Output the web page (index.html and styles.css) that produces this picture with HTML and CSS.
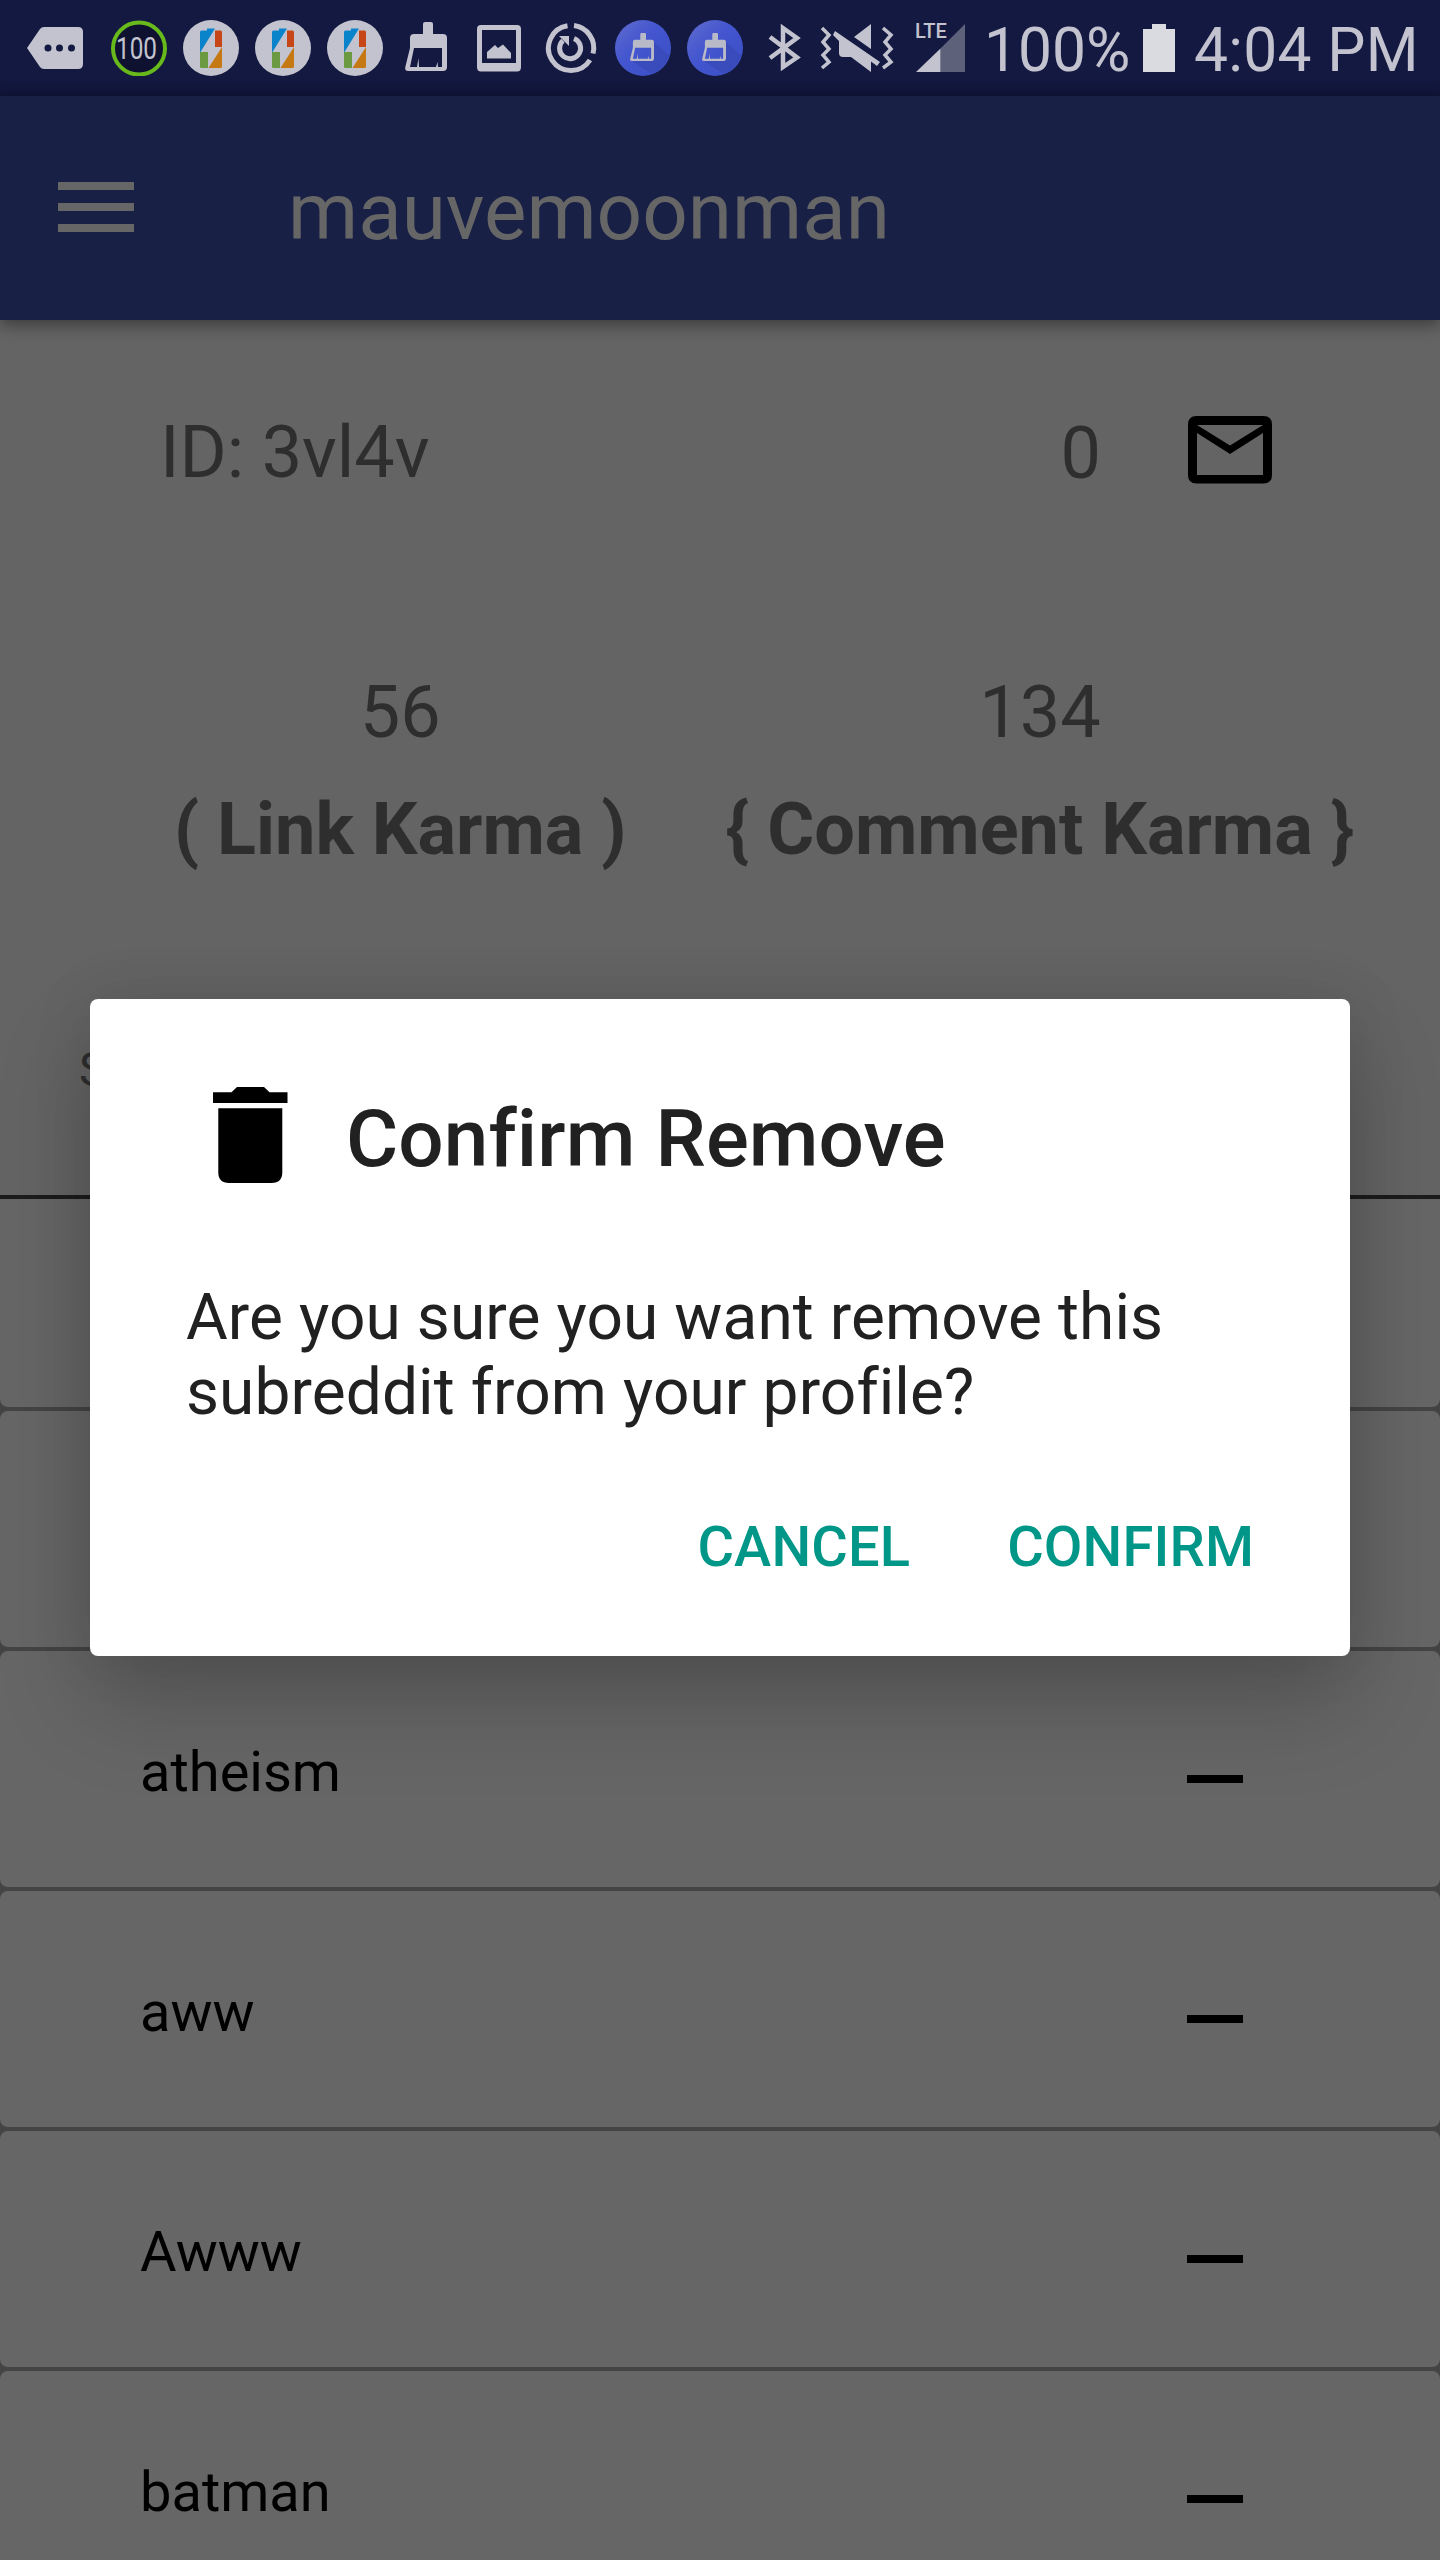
FILE: index.html
```html
<!DOCTYPE html>
<html lang="en">
<head>
<meta charset="utf-8">
<title>mauvemoonman</title>
<link rel="stylesheet" href="styles.css">
</head>
<body>
<svg class="defs" width="0" height="0" aria-hidden="true">
  <defs>
    <linearGradient id="cleaner" x1="0" y1="0" x2="1" y2="1"><stop offset="0" stop-color="#5f6ccf"/><stop offset=".45" stop-color="#4355cf"/><stop offset="1" stop-color="#3d4fc4"/></linearGradient>
    <symbol id="battery-app" viewBox="0 0 56 56">
      <circle cx="28" cy="28" r="28" fill="#c3c3cf"/>
      <path fill="#0984cb" d="M17 12Q17 10.500 18.500 10.500H24V8.500H32L17.500 32H17Z"/>
      <path fill="#c64617" d="M32 10.500H37.500Q39 10.500 39 12V27H32Z"/>
      <path fill="#6b9a42" d="M17 32H25V48H18.500Q17 48 17 46.500Z"/>
      <path fill="#c67812" d="M39 27V46.500Q39 48 37.500 48H25.500Z"/>
    </symbol>
    <symbol id="broom" viewBox="0 0 42 50">
      <path fill-rule="evenodd" d="M18 2Q18 0 20 0H26Q28 0 28 2V12H38Q42 12 42 16V45Q42 49 38 49H3Q-.5 49 .3 45L5 26V16Q5 12 9 12H18ZM9 26L5 45H12L13.500 36L14 45H31L32.500 40L33 45H37V26Z"/>
    </symbol>
    <symbol id="cleaner-app" viewBox="0 0 56 56">
      <circle cx="28" cy="28" r="28" fill="url(#cleaner)"/>
      <path fill="#3848b5" opacity=".7" d="M38 21L54 35.500Q49 50 37 54L17 41H38Z"/>
      <use href="#broom" x="15" y="13" width="24" height="28.500" fill="#b9bac8"/>
    </symbol>
  </defs>
</svg>
<div class="screen">
  <header class="status">
    <div class="notifications">
      <svg class="more" width="56" height="56" viewBox="0 0 56 56"><path fill="#c3c3cf" d="M0 28L13 9Q14.500 7 17 7H51Q56 7 56 12V44Q56 49 51 49H17Q14.500 49 13 47Z"/><g fill="#141941"><circle cx="21" cy="28" r="3.500"/><circle cx="32.500" cy="28" r="3.500"/><circle cx="44.500" cy="28" r="3.500"/></g></svg>
      <svg width="56" height="56" viewBox="0 0 56 56"><circle cx="28" cy="28.500" r="26" fill="#0e1230" stroke="#68b91b" stroke-width="4"/><text class="level" x="5" y="38.500" textLength="41" lengthAdjust="spacingAndGlyphs">100</text></svg>
      <svg width="56" height="56"><use href="#battery-app"/></svg>
      <svg width="56" height="56"><use href="#battery-app"/></svg>
      <svg width="56" height="56"><use href="#battery-app"/></svg>
      <svg width="56" height="56"><use href="#broom" x="6" y="2" width="42" height="50" fill="#c3c3cf"/></svg>
      <svg width="56" height="56" viewBox="0 0 56 56"><path fill="#c3c3cf" fill-rule="evenodd" d="M10 5H46Q50 5 50 9V47Q50 51.500 46 51.500H10Q6 51.500 6 47V9Q6 5 10 5ZM11 10V43H45V10ZM16 32L24 25L27 28L32 24.500L40 33V38.500H16Z"/></svg>
      <svg width="56" height="56" viewBox="0 0 56 56"><g fill="none" stroke="#c3c3cf" stroke-width="5"><path d="M24.500 5.800A22.500 22.500 0 1 0 47 40"/><path d="M31 5.600A22.500 22.500 0 0 1 50 33.500"/><path d="M31 18.500A10.500 10.500 0 1 1 20 20.500"/></g><path fill="#c3c3cf" d="M16 16H26V26L22.500 22.500L20 20Z"/></svg>
      <svg width="56" height="56"><use href="#cleaner-app"/></svg>
      <svg width="56" height="56"><use href="#cleaner-app"/></svg>
    </div>
    <svg class="bluetooth" width="34" height="50" viewBox="0 0 34 50"><path fill="none" stroke="#c3c3cf" stroke-width="4.500" d="M2 14L29 34.500L15 44V5L29 15L2 35"/></svg>
    <svg class="mute" width="74" height="50" viewBox="0 0 74 50"><g fill="none" stroke="#c3c3cf" stroke-width="3.500"><path d="M2 4L9 11L3 18L9 25L3 31L9 38L2 44"/><path d="M63 4L71 11L65 18L71 25L65 31L71 38L63 44"/></g><path fill="#c3c3cf" d="M15 7L60 38L57 42L51 37.500V48L31 33H23Q19 33 19 29V17L13 11ZM51 0V25L34 13Z"/></svg>
    <div class="signal"><svg width="50" height="50" viewBox="0 0 50 50"><path fill="#5e617a" d="M24.500 24.500L49 0V48H24.500Z"/><path fill="#c3c3cf" d="M0 48L24.500 24.500V48Z"/></svg><span class="lte">LTE</span></div>
    <span class="percent">100%</span>
    <svg class="charge" width="32" height="48" viewBox="0 0 32 48"><path fill="#dadbe1" d="M9 0H23V5H32V48H0V5H9Z"/></svg>
    <span class="clock">4:04 PM</span>
  </header>
  <nav class="appbar">
    <div class="menu"><i></i><i></i><i></i></div>
    <h1>mauvemoonman</h1>
  </nav>
  <main>
    <section class="identity">
      <span>ID: 3vl4v</span>
      <span class="mail">0</span>
      <svg width="84" height="68" viewBox="0 0 84 68"><path fill-rule="evenodd" d="M8.500 0H75.500Q84 0 84 8.500V59Q84 67.500 75.500 67.500H8.500Q0 67.500 0 59V8.500Q0 0 8.500 0ZM9 17V59H75V17L42 38ZM9 9L42 29.500L75 9Z"/></svg>
    </section>
    <section class="karma">
      <div class="stat"><span>56</span><b>( Link Karma )</b></div>
      <div class="stat"><span>134</span><b>{ Comment Karma }</b></div>
    </section>
    <div class="heading">S</div>
    <div class="list">
      <div class="card first"></div>
      <div class="card"></div>
      <div class="card"><span>atheism</span><i class="minus"></i></div>
      <div class="card"><span>aww</span><i class="minus"></i></div>
      <div class="card"><span>Awww</span><i class="minus"></i></div>
      <div class="card"><span>batman</span><i class="minus"></i></div>
    </div>
  </main>
  <div class="dialog" role="dialog">
    <div class="dialog-title">
      <svg width="75" height="96" viewBox="0 0 75 96"><path d="M0 5.300H18.500L24 0H51L56.500 5.300H74.500V16H0ZM5.300 21.300H69.300V85.300Q69.300 96 58.600 96H16Q5.300 96 5.300 85.300Z"/></svg>
      <h2>Confirm Remove</h2>
    </div>
    <p>Are you sure you want remove this<br>subreddit from your profile?</p>
    <div class="actions"><button>CANCEL</button><button>CONFIRM</button></div>
  </div>
</div>
</body>
</html>
```
FILE: styles.css
```css
* { box-sizing: border-box; }
body { margin: 0; font-family: Roboto, "Noto Sans", sans-serif; }
.defs { position: absolute; }
svg { display: block; flex: none; }
h1, h2, p { margin: 0; font-weight: 400; }

.screen { position: relative; width: 1440px; height: 2560px; overflow: hidden; background: #646464; }

.status { display: flex; height: 96px; padding-left: 27px; align-items: flex-start; color: #c3c3cf; background: linear-gradient(#141941 78px, #10153a); white-space: nowrap; }
.notifications { display: flex; gap: 16px; padding-top: 20px; }
.more { margin-right: 12px; }
.level { font-size: 31px; fill: #c3c3cf; }
.bluetooth { margin: 23px 0 0 25px; }
.mute { margin: 24px 0 0 18px; }
.signal { position: relative; margin: 24px 0 0 22px; }
.lte { position: absolute; left: -1px; top: -5px; font: 500 20px/24px Roboto, sans-serif; }
.percent, .clock { font-size: 60.5px; line-height: 101px; height: 96px; }
.percent { width: 158px; padding-left: 18px; margin-right: 1px; }
.clock { letter-spacing: .3px; }
.charge { margin: 24px 19px 0 18px; }

.appbar { position: relative; display: flex; height: 224px; padding-left: 58px; background: #182046; box-shadow: 0 4px 16px rgba(0, 0, 0, .45); color: #666; }
.menu { display: flex; flex-direction: column; gap: 13px; width: 76px; padding-top: 86px; }
.menu i { height: 8px; background: #666; }
h1 { margin-left: 154px; font-size: 80px; line-height: 232px; height: 224px; }

.identity { display: flex; height: 260px; padding: 0 168px 0 160px; color: #2e2e2e; font-size: 72px; line-height: 266px; }
.identity span:first-child { letter-spacing: -.1px; }
.mail { margin: 1px 87px 0 auto; }
.identity svg { margin-top: 96px; fill: #000; }
.karma { display: flex; gap: 99px; padding: 74px 0 0 174px; height: 405px; color: #2e2e2e; font-size: 72px; line-height: 117px; }
.stat { display: flex; flex-direction: column; align-items: center; }
.heading { height: 214px; padding: 55px 0 0 79px; border-bottom: 4px solid #1c1c1c; color: #2e2e2e; font-size: 48px; line-height: 60px; }

.list { display: flex; flex-direction: column; gap: 4px; background: #444; }
.card { display: flex; justify-content: space-between; height: 236px; flex: none; padding: 0 197px 0 140px; border-radius: 8px; background: #666; color: #000; font-size: 56px; line-height: 242px; }
.card.first { height: 208px; border-radius: 0 0 8px 8px; }
.minus { width: 56px; height: 8px; margin-top: 124px; background: #000; }

.dialog { position: absolute; left: 90px; top: 999px; width: 1260px; height: 657px; padding: 88px 96px 0; border-radius: 8px; background: #fff; color: #212121; box-shadow: 0 48px 96px rgba(0, 0, 0, .2), 0 0 60px rgba(0, 0, 0, .1); }
.dialog-title { display: flex; height: 179px; padding-left: 27px; gap: 58px; }
h2 { font-size: 80px; font-weight: 500; line-height: 104px; letter-spacing: .1px; }
.dialog p { font-size: 64px; line-height: 75px; margin-top: 14px; white-space: nowrap; letter-spacing: .09px; }
.actions { display: flex; justify-content: flex-end; gap: 97px; margin-top: 84px; }
.actions button { padding: 0; border: 0; background: none; color: #009688; font: 500 56px/66px Roboto, sans-serif; letter-spacing: .15px; }
```
